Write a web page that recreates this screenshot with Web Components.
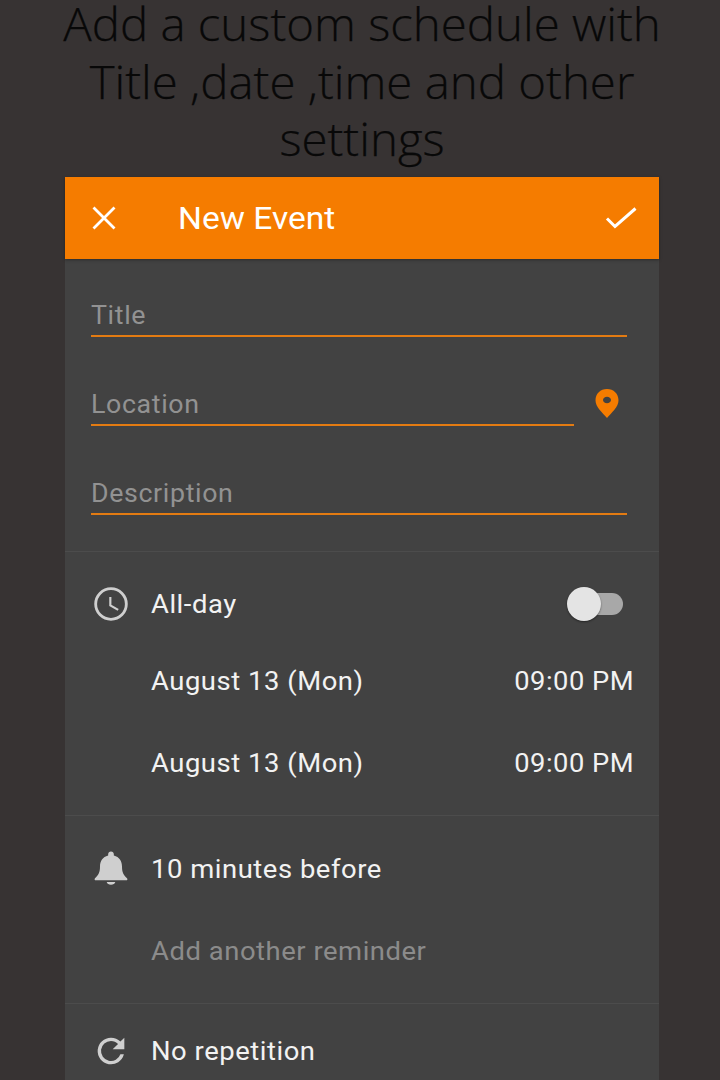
<!DOCTYPE html>
<html>
<head>
<meta charset="utf-8">
<title>New Event</title>
<style>
    html, body { margin: 0; height: 1080px; overflow: hidden; background: #373333; }
    body { font-family: Roboto, "Liberation Sans", sans-serif; }
</style>
</head>
<body>
<promo-page>
    <span slot="caption">Add a custom schedule with Title ,date ,time and other settings</span>
    <event-bar>New Event</event-bar>
    <form-section style="--pad-top:10px;--pad-bottom:15px">
        <text-field>Title</text-field>
        <text-field short>Location</text-field>
        <text-field>Description</text-field>
    </form-section>
    <form-section style="--pad-top:16px;--pad-bottom:11px">
        <setting-row icon="clock" height="72">
            All-day
            <toggle-switch slot="end"></toggle-switch>
        </setting-row>
        <setting-row height="82">
            August 13 (Mon)
            <span slot="end">09:00 PM</span>
        </setting-row>
        <setting-row height="82">
            August 13 (Mon)
            <span slot="end">09:00 PM</span>
        </setting-row>
    </form-section>
    <form-section style="--pad-top:12px;--pad-bottom:11px">
        <setting-row icon="bell" height="82">10 minutes before</setting-row>
        <setting-row height="82" muted>Add another reminder</setting-row>
    </form-section>
    <form-section style="--pad-top:6px;--pad-bottom:0px">
        <setting-row icon="repeat" height="82">No repetition</setting-row>
    </form-section>
</promo-page>

<script>
    const ICONS = {
        clock: '<circle cx="12" cy="12" r="9.200" fill="none" stroke="currentColor" stroke-width="1.700"/><path d="M11.600 7.800v5l4.700 2.700" fill="none" stroke="currentColor" stroke-width="1.300"/>',
        bell: '<path fill="currentColor" d="M12 1.500c-1 0-1.700.7-1.700 1.700v.7C7 4.800 5.400 7.300 5.400 10.500c0 3.500-.8 5-3 7-.5.5-.2 1.300.5 1.300h18.200c.7 0 1-.8.5-1.300-2.200-2-3-3.500-3-7 0-3.200-1.600-5.700-4.900-6.600v-.7c0-1-.7-1.700-1.700-1.700zM9.400 19.800h5.200c-.3 1-1.300 1.700-2.600 1.700s-2.300-.7-2.600-1.700z"/>',
        repeat: '<path fill="currentColor" d="M17.650 6.350A7.960 7.960 0 0 0 12 4a8 8 0 1 0 7.730 10h-2.080A6 6 0 1 1 12 6c1.660 0 3.140.69 4.220 1.780L13 11h7V4l-2.350 2.350z"/>'
    };

    class PromoPage extends HTMLElement {
        constructor() {
            super();
            this.attachShadow({ mode: 'open' });
            this.shadowRoot.innerHTML = `
                <style>
                    :host { display: block; width: 720px; height: 1080px; overflow: hidden; }
                    .head { height: 177px; display: flow-root; }
                    .caption {
                        width: 610px;
                        margin: -5px 0 0 57px;
                        text-align: center;
                        color: #080808;
                        font: 300 46px/57.500px "Open Sans", sans-serif;
                        -webkit-text-stroke: .25px #080808;
                        transform: scaleX(1.03);
                    }
                    .card { width: 594px; margin-left: 65px; background: #424242; }
                </style>
                <div class="head"><div class="caption"><slot name="caption"></slot></div></div>
                <div class="card"><slot></slot></div>
            `;
        }
    }

    class EventBar extends HTMLElement {
        constructor() {
            super();
            this.attachShadow({ mode: 'open' });
            this.shadowRoot.innerHTML = `
                <style>
                    :host {
                        display: flex;
                        align-items: center;
                        height: 82px;
                        background: #f57c00;
                        color: #fff;
                        box-shadow: 0 1px 3px rgba(0,0,0,.35);
                        position: relative;
                        font-size: 30.500px;
                    }
                    svg { display: block; flex: none; }
                    .close { margin-left: 25px; }
                    .title { flex: 1; margin-left: 60px; }
                    .title span { display: inline-block; transform: scaleX(1.1); transform-origin: left; }
                    .done { margin-right: 22px; }
                </style>
                <svg class="close" width="28" height="28" viewBox="0 0 28 28"><path d="M3.500 3.500l21 21M24.500 3.500l-21 21" stroke="#fff" stroke-width="2.800" fill="none"/></svg>
                <div class="title"><span><slot></slot></span></div>
                <svg class="done" width="32" height="24" viewBox="0 0 32 24"><path d="M2 12.500l8 8L30.500 2.500" stroke="#fff" stroke-width="3" fill="none"/></svg>
            `;
        }
    }

    class FormSection extends HTMLElement {
        constructor() {
            super();
            this.attachShadow({ mode: 'open' });
            this.shadowRoot.innerHTML = `
                <style>
                    :host {
                        display: block;
                        padding: var(--pad-top) 0 var(--pad-bottom);
                        border-bottom: 1px solid #4c4c4c;
                    }
                    :host(:last-child) { border-bottom: none; }
                </style>
                <slot></slot>
            `;
        }
    }

    class TextField extends HTMLElement {
        constructor() {
            super();
            this.attachShadow({ mode: 'open' });
            const pin = this.hasAttribute('short')
                ? '<svg class="pin" width="26" height="32" viewBox="0 0 26 32"><path fill="#f57c00" fill-rule="evenodd" d="M13 2C6.400 2 1.500 6.800 1.500 13.200 1.500 20 8.500 25.600 13 31c4.500-5.400 11.500-11 11.500-17.800C24.500 6.800 19.600 2 13 2zm0 7.700c2.200 0 4 1.500 4 3.300s-1.800 3.300-4 3.300-4-1.500-4-3.300 1.800-3.300 4-3.300z"/></svg>'
                : '';
            this.shadowRoot.innerHTML = `
                <style>
                    :host { display: flex; align-items: center; height: 89px; padding: 0 32px 0 26px; }
                    .input {
                        flex: 1;
                        height: 46px;
                        line-height: 50px;
                        box-sizing: border-box;
                        border-bottom: 2px solid #e37b12;
                        color: #929292;
                        font-size: 25px;
                        letter-spacing: .6px;
                    }
                    .input span { display: inline-block; transform: scaleX(1.07); transform-origin: left; }
                    .pin { flex: none; margin: 0 7px 0 20px; }
                </style>
                <div class="input"><span><slot></slot></span></div>
                ${pin}
            `;
        }
    }

    class SettingRow extends HTMLElement {
        constructor() {
            super();
            this.attachShadow({ mode: 'open' });
            const icon = ICONS[this.getAttribute('icon')];
            const svg = icon ? `<svg width="40" height="40" viewBox="0 0 24 24">${icon}</svg>` : '';
            this.shadowRoot.innerHTML = `
                <style>
                    :host {
                        display: flex;
                        align-items: center;
                        height: ${this.getAttribute('height')}px;
                        padding: 0 25px 0 25px;
                        color: #f2f2f2;
                        font-size: 25.500px;
                        letter-spacing: .5px;
                    }
                    :host([muted]) { color: #8b8b8b; }
                    .icon { width: 41px; height: 40px; margin-right: 20px; flex: none; color: #cfcfcf; }
                    .icon svg { margin-left: 1px; }
                    .label { flex: 1; }
                    .label span { display: inline-block; transform: scaleX(1.075); transform-origin: left; }
                    ::slotted(span) { display: inline-block; transform: scaleX(1.07); transform-origin: right; }
                    svg { display: block; }
                </style>
                <div class="icon">${svg}</div>
                <div class="label"><span><slot></slot></span></div>
                <slot name="end"></slot>
            `;
        }
    }

    class ToggleSwitch extends HTMLElement {
        constructor() {
            super();
            this.attachShadow({ mode: 'open' });
            this.shadowRoot.innerHTML = `
                <style>
                    :host { display: block; position: relative; width: 56px; height: 34px; margin-right: 11px; }
                    .track { position: absolute; left: 2px; right: 0; top: 6px; height: 22px; border-radius: 11px; background: #a8a8a8; }
                    .thumb { position: absolute; left: 0; top: 0; width: 34px; height: 34px; border-radius: 50%; background: #e4e4e4; box-shadow: 0 1px 2px rgba(0,0,0,.45); }
                </style>
                <div class="track"></div>
                <div class="thumb"></div>
            `;
        }
    }

    customElements.define('promo-page', PromoPage);
    customElements.define('event-bar', EventBar);
    customElements.define('form-section', FormSection);
    customElements.define('text-field', TextField);
    customElements.define('setting-row', SettingRow);
    customElements.define('toggle-switch', ToggleSwitch);
</script>
</body>
</html>
